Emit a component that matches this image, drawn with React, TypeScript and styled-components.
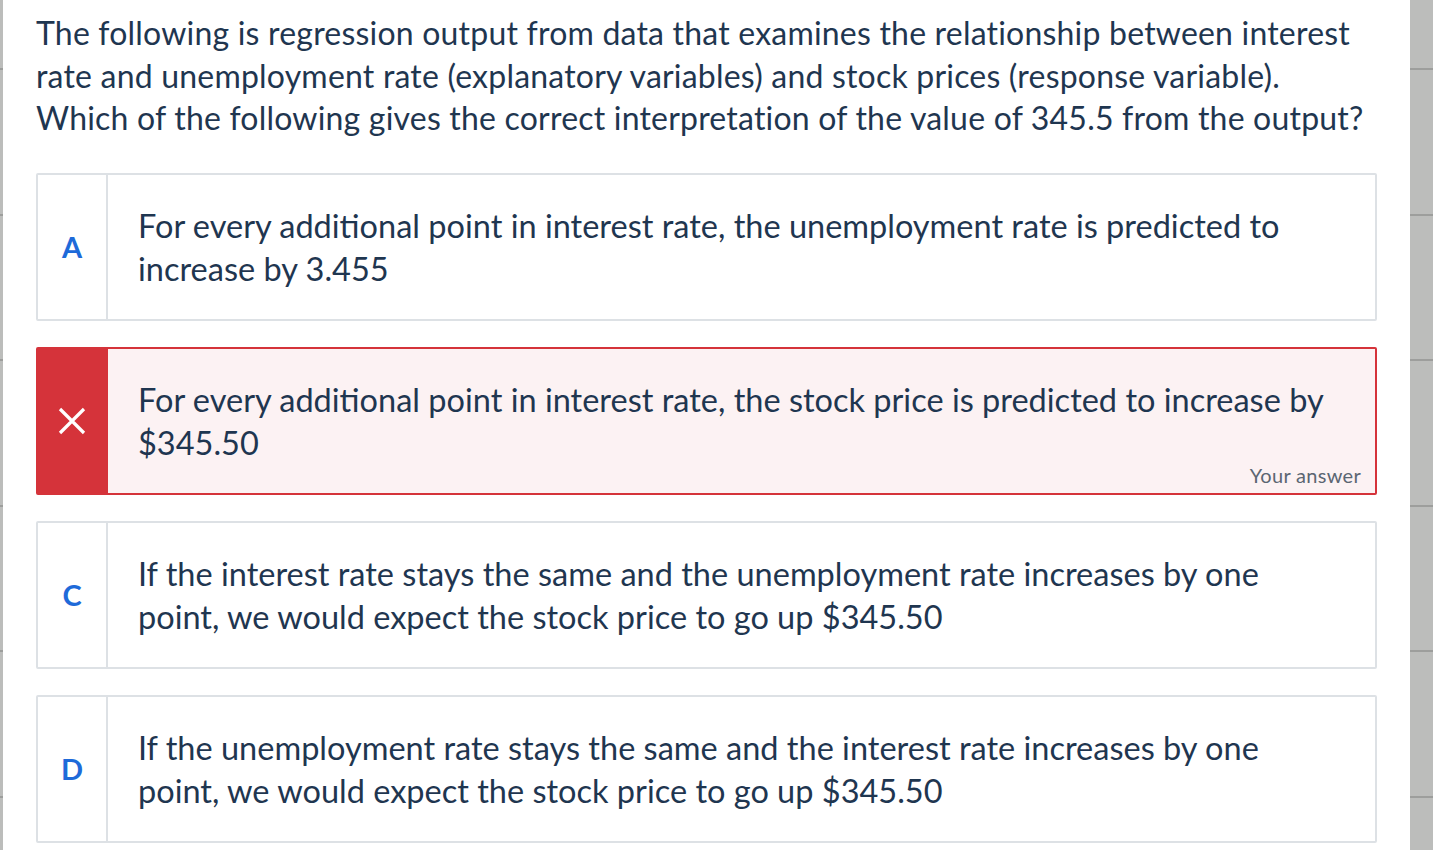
import styled, { createGlobalStyle } from "styled-components"

const GlobalStyle = createGlobalStyle`
  html, body {
    margin: 0;
    padding: 0;
    background: #ffffff;
  }
  body {
    font-family: Lato, "Noto Sans", sans-serif;
    color: #1f3650;
  }
`;

const Page = styled.div`
  display: grid;
  grid-template-columns: 3px 1fr 23px;
  width: 1433px;
  height: 850px;
  overflow: hidden;
`;

const SideStrip = styled.div`
  background: #bcbdbb;
  background-image: repeating-linear-gradient(
    to bottom,
    transparent 0,
    transparent 68px,
    #9d9e9c 68px,
    #9d9e9c 70px,
    transparent 70px,
    transparent 145.6px
  );
`;

const Main = styled.div`
  padding: 12px 33px 0 33px;
  display: flex;
  flex-direction: column;
`;

const Question = styled.p`
  margin: 0 0 33px 0;
  font-size: 32px;
  line-height: 42.5px;
  letter-spacing: 0.2px;
`;

const Options = styled.div`
  display: flex;
  flex-direction: column;
  gap: 26px;
`;

const Option = styled.div<{ $wrong?: boolean }>`
  position: relative;
  display: grid;
  grid-template-columns: 70px 1fr;
  min-height: 148px;
  box-sizing: border-box;
  border: 2px solid ${(p) => (p.$wrong ? "#d5333a" : "#dde1e5")};
  border-radius: 2px;
  background: ${(p) => (p.$wrong ? "#fcf2f3" : "#ffffff")};
`;

const Marker = styled.div<{ $wrong?: boolean }>`
  display: flex;
  align-items: center;
  justify-content: center;
  border-right: 2px solid ${(p) => (p.$wrong ? "#d5333a" : "#dde1e5")};
  background: ${(p) => (p.$wrong ? "#d5333a" : "transparent")};
  color: #1e6ad9;
  font-size: 29px;
  font-weight: 700;
`;

const Body = styled.div`
  display: flex;
  align-items: center;
  padding: 0 40px 0 30px;
  font-size: 32.5px;
  line-height: 43px;
  letter-spacing: 0;
`;

const YourAnswer = styled.span`
  position: absolute;
  right: 14px;
  bottom: 6px;
  font-size: 20px;
  letter-spacing: 0.3px;
  color: #5b6672;
`;

const options = [
  {
    key: "A",
    text: "For every additional point in interest rate, the unemployment rate is predicted to increase by 3.455",
  },
  {
    key: "B",
    wrong: true,
    text: "For every additional point in interest rate, the stock price is predicted to increase by $345.50",
  },
  {
    key: "C",
    text: "If the interest rate stays the same and the unemployment rate increases by one point, we would expect the stock price to go up $345.50",
  },
  {
    key: "D",
    text: "If the unemployment rate stays the same and the interest rate increases by one point, we would expect the stock price to go up $345.50",
  },
];

export default function App() {
  return (
    <>
      <GlobalStyle />
      <Page>
        <SideStrip />
        <Main>
          <Question>
            The following is regression output from data that examines the relationship between interest
            rate and unemployment rate (explanatory variables) and stock prices (response variable).
            Which of the following gives the correct interpretation of the value of 345.5 from the output?
          </Question>
          <Options>
            {options.map((o) => (
              <Option key={o.key} $wrong={o.wrong}>
                <Marker $wrong={o.wrong}>
                  {o.wrong ? (
                    <svg width="28" height="28" viewBox="0 0 28 28">
                      <path d="M2 2 L26 26 M26 2 L2 26" stroke="#fff" strokeWidth="3.2" />
                    </svg>
                  ) : (
                    o.key
                  )}
                </Marker>
                <Body>{o.text}</Body>
                {o.wrong && <YourAnswer>Your answer</YourAnswer>}
              </Option>
            ))}
          </Options>
        </Main>
        <SideStrip />
      </Page>
    </>
  )
}
